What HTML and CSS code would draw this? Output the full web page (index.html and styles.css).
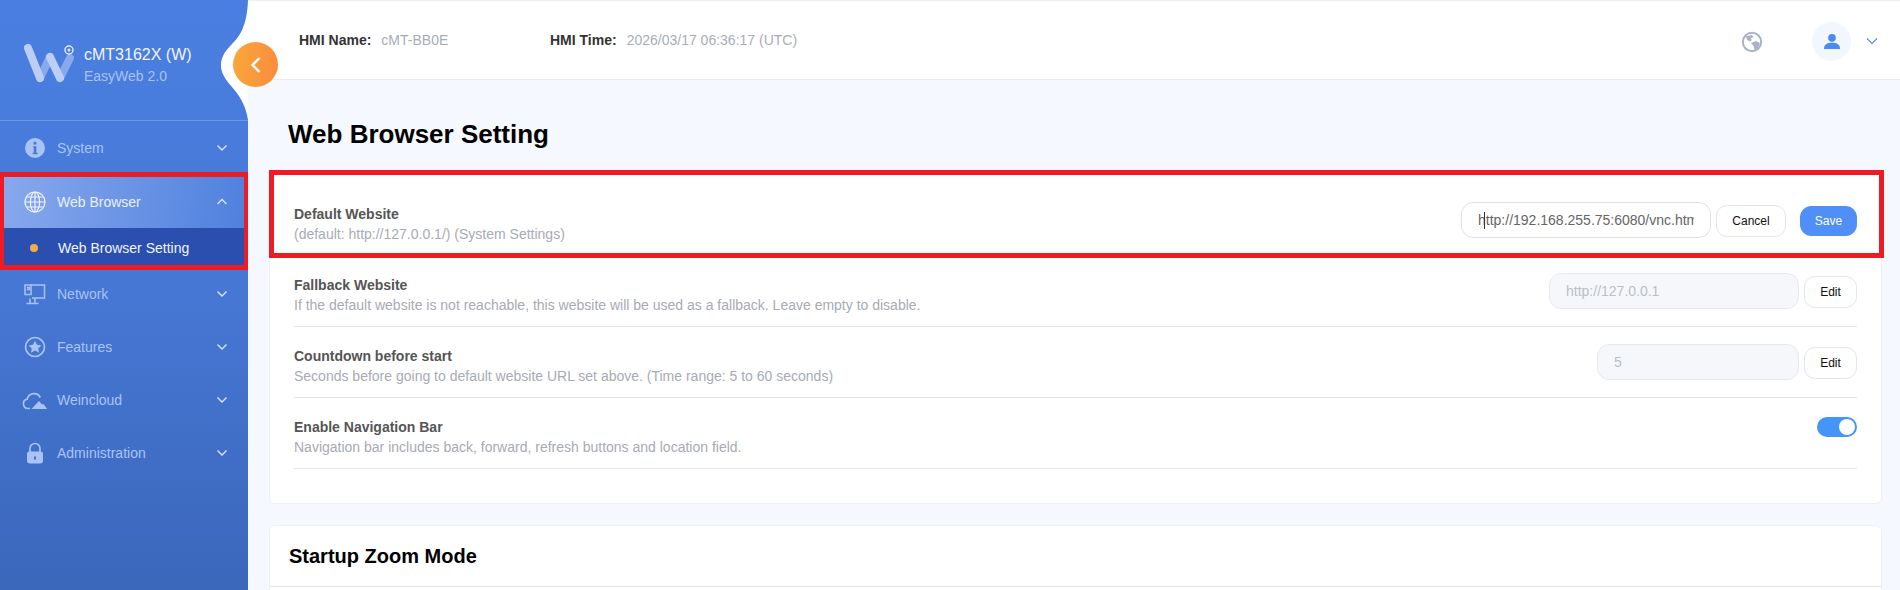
FILE: index.html
```html
<!DOCTYPE html>
<html lang="en">
<head>
<meta charset="utf-8">
<title>Web Browser Setting</title>
<link rel="stylesheet" href="styles.css">
</head>
<body>
<aside class="sidebar">
  <div class="brand">
    <svg class="logo" width="50" height="42" viewBox="0 0 50 42">
      <path d="M16 35 L26 14" class="logo-b"/>
      <path d="M36 35 L46 15" class="logo-b"/>
      <path d="M4 5 L16 35" class="logo-a"/>
      <path d="M26 14 L36 35" class="logo-a"/>
      <circle cx="45" cy="7" r="4" class="logo-ring"/>
      <circle cx="45" cy="7" r="1.500" class="logo-dot"/>
    </svg>
    <div class="brand-text">
      <div class="brand-name">cMT3162X (W)</div>
      <div class="brand-sub">EasyWeb 2.0</div>
    </div>
  </div>
  <nav class="menu">
    <div class="item first">
      <svg class="icon" width="24" height="24" viewBox="0 0 24 24"><path class="fill" fill-rule="evenodd" d="M12 2a10 10 0 1 0 0 20 10 10 0 0 0 0-20zM12 5.600a1.600 1.600 0 1 1 0 3.200 1.600 1.600 0 0 1 0-3.200zM10 10.200h3.400v6.600h1.200v1.400h-5v-1.400h1.200v-5.200h-.8z"/></svg>
      <span class="label">System</span>
      <svg class="chev" width="12" height="8" viewBox="0 0 12 8"><path d="M1.500 1.500 L6 6 L10.500 1.500"/></svg>
    </div>
    <div class="item active">
      <svg class="icon" width="24" height="24" viewBox="0 0 24 24"><g class="line"><circle cx="12" cy="12" r="10"/><ellipse cx="12" cy="12" rx="4.600" ry="10"/><path d="M12 2v20M2 12h20M3.400 7h17.200M3.400 17h17.200"/></g></svg>
      <span class="label">Web Browser</span>
      <svg class="chev" width="12" height="8" viewBox="0 0 12 8"><path d="M1.500 6 L6 1.500 L10.500 6"/></svg>
    </div>
    <div class="subitem"><span class="dot"></span><span>Web Browser Setting</span></div>
    <div class="item">
      <svg class="icon" width="24" height="24" viewBox="0 0 24 24"><g class="line"><path d="M8 3h13.500v13H9M7 16.500v4.500M3.500 21.500h12M12 16.500v5"/><path d="M2 3h6v9.500H2zM3.800 5.500h2.400v2H3.800"/></g></svg>
      <span class="label">Network</span>
      <svg class="chev" width="12" height="8" viewBox="0 0 12 8"><path d="M1.500 1.500 L6 6 L10.500 1.500"/></svg>
    </div>
    <div class="item">
      <svg class="icon" width="24" height="24" viewBox="0 0 24 24"><circle class="line ring" cx="12" cy="12" r="9.500"/><path class="fill" d="M12 5.800l2 4 4.400.6-3.200 3 .8 4.300-4-2.100-4 2.100.8-4.300-3.200-3 4.400-.6z"/></svg>
      <span class="label">Features</span>
      <svg class="chev" width="12" height="8" viewBox="0 0 12 8"><path d="M1.500 1.500 L6 6 L10.500 1.500"/></svg>
    </div>
    <div class="item">
      <svg class="icon wide" width="26" height="24" viewBox="0 0 26 24"><path class="line ring" d="M8 20.500H6A4.700 4.700 0 0 1 5.200 11.200 7 7 0 0 1 18.300 9.500"/><path class="fill" d="M9.500 21l7.500-8 3 3.500 1.500-.5 3.500 5z"/></svg>
      <span class="label">Weincloud</span>
      <svg class="chev" width="12" height="8" viewBox="0 0 12 8"><path d="M1.500 1.500 L6 6 L10.500 1.500"/></svg>
    </div>
    <div class="item">
      <svg class="icon" width="24" height="24" viewBox="0 0 24 24"><path class="line ring" d="M7 11V7.500a5 5 0 0 1 10 0V11"/><path class="fill" fill-rule="evenodd" d="M6.500 10.500h11a2.500 2.500 0 0 1 2.500 2.500v6.500a3 3 0 0 1-3 3H7a3 3 0 0 1-3-3V13a2.500 2.500 0 0 1 2.500-2.500zM11 15.500v3h2v-3z"/></svg>
      <span class="label">Administration</span>
      <svg class="chev" width="12" height="8" viewBox="0 0 12 8"><path d="M1.500 1.500 L6 6 L10.500 1.500"/></svg>
    </div>
  </nav>
</aside>

<svg class="notch" width="28" height="120" viewBox="0 0 28 120"><path d="M28 0 V120 C26 106 20 96 12 87 C4 78 1 72 1 65 C1 58 4 52 12 44 C20 36 27 26 28 0 Z"/></svg>
<div class="collapse">
  <svg width="16" height="20" viewBox="0 0 16 20"><path d="M11.500 3 L4.500 10 L11.500 17"/></svg>
</div>

<main class="main">
  <header class="topbar">
    <div class="info name"><b>HMI Name:</b><span>cMT-BB0E</span></div>
    <div class="info time"><b>HMI Time:</b><span>2026/03/17 06:36:17 (UTC)</span></div>
    <div class="tools">
      <svg class="earth" width="22" height="22" viewBox="0 0 22 22"><circle class="earth-ring" cx="11" cy="11" r="9.200"/><path class="earth-land" d="M4.500 5.500 L11 4 L12.500 6 L9.500 7.500 L11 9 L8.500 10.500 L6 8.500 Z M10 12 L15 10 L19 12 L17 17 L13.500 19 L12.500 15 Z"/></svg>
      <div class="avatar">
        <svg width="16" height="15" viewBox="0 0 16 15"><circle cx="8" cy="3.900" r="3.800"/><path d="M0 15 C0 10.500 3 8.800 8 8.800 C13 8.800 16 10.500 16 15 Z"/></svg>
      </div>
      <svg class="caret-down" width="12" height="8" viewBox="0 0 12 8"><path d="M1 1.500 L6 6.500 L11 1.500"/></svg>
    </div>
  </header>

  <div class="content">
    <h1 class="page-title">Web Browser Setting</h1>
    <section class="card">
      <div class="row">
        <div class="text">
          <div class="row-title">Default Website</div>
          <div class="row-desc">(default: http://127.0.0.1/) (System Settings)</div>
        </div>
        <div class="field"><span class="field-text">http://192.168.255.75:6080/vnc.html</span><i class="text-caret"></i></div>
        <button class="btn cancel">Cancel</button>
        <button class="btn primary">Save</button>
      </div>
      <div class="row">
        <div class="text">
          <div class="row-title">Fallback Website</div>
          <div class="row-desc">If the default website is not reachable, this website will be used as a fallback. Leave empty to disable.</div>
        </div>
        <div class="field disabled"><span class="field-text">http://127.0.0.1</span></div>
        <button class="btn">Edit</button>
      </div>
      <div class="row">
        <div class="text">
          <div class="row-title">Countdown before start</div>
          <div class="row-desc">Seconds before going to default website URL set above. (Time range: 5 to 60 seconds)</div>
        </div>
        <div class="field disabled short"><span class="field-text">5</span></div>
        <button class="btn">Edit</button>
      </div>
      <div class="row">
        <div class="text">
          <div class="row-title">Enable Navigation Bar</div>
          <div class="row-desc">Navigation bar includes back, forward, refresh buttons and location field.</div>
        </div>
        <span class="toggle"><span class="knob"></span></span>
      </div>
    </section>
    <section class="card second">
      <h2 class="card-title">Startup Zoom Mode</h2>
    </section>
  </div>
</main>

<div class="mark mark-nav"></div>
<div class="mark mark-row"></div>
</body>
</html>
```
FILE: styles.css
```css
* { box-sizing: border-box; }
html, body { height: 590px; overflow: hidden; }
body {
  margin: 0;
  display: flex;
  position: relative;
  font-family: "Liberation Sans", Arial, sans-serif;
  background: #f5f9ff;
  color: #333;
}

/* sidebar */
.sidebar {
  width: 248px;
  height: 590px;
  flex: none;
  background: linear-gradient(180deg, #4a7fe1 0%, #4677d4 50%, #3b67bb 100%);
}
.brand {
  height: 121px;
  border-bottom: 1px solid #6d98e8;
  display: flex;
  align-items: flex-start;
  padding: 43px 0 0 24px;
  gap: 10px;
}
.logo { flex: none; }
.logo path { fill: none; stroke-width: 8; stroke-linecap: round; }
.logo-a { stroke: #bccef5; }
.logo-b { stroke: #9db8ef; stroke-opacity: .75; }
.logo-ring { fill: none; stroke: #dfe8fb; stroke-width: 1.500; }
.logo-dot { fill: #dfe8fb; }
.brand-text { margin-top: 1px; }
.brand-name { font-size: 16px; line-height: 22px; color: #f1f5fd; }
.brand-sub { font-size: 14px; line-height: 20px; margin-top: 0; color: #a9c2f3; }

.menu { display: flex; flex-direction: column; }
.item {
  height: 53px;
  display: flex;
  align-items: center;
  padding: 0 20px 0 23px;
  color: #a9c3f4;
  font-size: 14px;
}
.item.first { margin-bottom: 1px; }
.item .icon { flex: none; }
.item .icon.wide { margin-left: -1px; margin-right: -1px; }
.label { margin-left: 10px; flex: 1; }
.item.active {
  background: linear-gradient(100deg, #89a9ed 0%, #4e80de 100%);
  color: #eaf0fc;
}
.fill { fill: #a9c3f4; }
.line { fill: none; stroke: #a9c3f4; stroke-width: 1.500; }
.ring { stroke-width: 1.700; }
.item.active .line { stroke: #eef3fd; stroke-width: 1.200; }
.chev { fill: none; flex: none; }
.chev path { fill: none; stroke: #dce6fa; stroke-width: 1.400; }
.subitem {
  height: 39px;
  background: #2a4fae;
  color: #f0f4fd;
  font-size: 14px;
  display: flex;
  align-items: center;
  padding-left: 30px;
  gap: 20px;
}
.dot { width: 8px; height: 8px; border-radius: 50%; background: #f6ab4a; flex: none; }

/* collapse handle */
.notch { position: absolute; left: 220px; top: 0; }
.notch path { fill: #fff; }
.collapse {
  position: absolute;
  left: 233px;
  top: 42px;
  width: 45px;
  height: 45px;
  border-radius: 50%;
  background: linear-gradient(100deg, #f9a93a 0%, #f98a3e 100%);
  display: flex;
  align-items: center;
  justify-content: center;
}
.collapse path { fill: none; stroke: #fff; stroke-width: 2.400; }

/* main column */
.main { flex: 1; min-width: 0; display: flex; flex-direction: column; }
.topbar {
  height: 80px;
  flex: none;
  background: #fff;
  border-top: 1px solid #eeeeee;
  border-bottom: 1px solid #e8ebf0;
  display: flex;
  align-items: center;
  padding: 0 22px 0 51px;
  font-size: 14px;
}
.info { display: flex; gap: 10px; }
.info b { color: #333; }
.info span { color: #a7adb8; }
.info.name { width: 251px; }
.tools { margin-left: auto; display: flex; align-items: center; }
.earth { margin-right: 49px; margin-top: 4px; }
.earth-ring { fill: none; stroke: #a9b3c6; stroke-width: 2; }
.earth-land { fill: #a9b3c6; }
.avatar {
  width: 39px;
  height: 39px;
  border-radius: 50%;
  background: #f2f6fd;
  display: flex;
  align-items: center;
  justify-content: center;
  margin-right: 15px;
  margin-top: 2px;
}
.avatar svg { fill: #4a8af4; }
.caret-down { margin-top: 2px; }
.caret-down path { fill: none; stroke: #4a8af4; stroke-width: 1.100; }

.content { padding: 0 18px 0 21px; }
.page-title {
  margin: 0;
  height: 90px;
  padding: 36px 0 0 19px;
  font-size: 26px;
  line-height: 36px;
  font-weight: 700;
  color: #000;
}
.card {
  background: #fff;
  border: 1px solid #edf0f5;
  border-radius: 6px;
  padding: 14px 24px 35px;
  height: 334px;
}
.row {
  height: 71px;
  border-bottom: 1px solid #e3e6eb;
  display: flex;
  align-items: center;
}
.text { flex: 1; padding-top: 8px; }
.row-title { font-size: 14px; line-height: 20px; font-weight: 700; color: #555; }
.row-desc { font-size: 14px; line-height: 21px; color: #a7abb3; }
.field {
  position: relative;
  width: 250px;
  height: 36px;
  border: 1px solid #dfe3e9;
  border-radius: 12px;
  padding: 0 16px;
  font-size: 14px;
  line-height: 34px;
  color: #666;
  overflow: hidden;
  white-space: nowrap;
  margin-right: 5px;
  flex: none;
}
.field-text { display: block; overflow: hidden; }
.field.disabled { background: #f5f7fa; color: #bcbfc6; border-color: #e7e9ee; }
.field.short { width: 202px; }
.text-caret {
  position: absolute;
  left: 22px;
  top: 9px;
  width: 1px;
  height: 17px;
  background: #333;
}
.btn {
  height: 32px;
  width: 53px;
  margin-top: 2px;
  padding: 0;
  border: 1px solid #e3e6eb;
  border-radius: 11px;
  background: #fff;
  color: #111;
  font: 12px "Liberation Sans", Arial, sans-serif;
  flex: none;
}
.btn.cancel { width: 70px; }
.btn.primary {
  height: 30px;
  width: 57px;
  margin-left: 14px;
  background: #4f8ff7;
  border-color: #4f8ff7;
  color: #fff;
}
.toggle {
  width: 40px;
  height: 20px;
  border-radius: 10px;
  background: #4396f6;
  padding: 2px;
  display: flex;
  justify-content: flex-end;
  margin-bottom: 12px;
  flex: none;
}
.knob { width: 16px; height: 16px; border-radius: 50%; background: #fff; }

.card.second { height: 80px; margin-top: 21px; padding: 0; }
.card-title {
  margin: 0;
  height: 61px;
  border-bottom: 1px solid #e3e6eb;
  padding-left: 19px;
  font-size: 20px;
  line-height: 61px;
  font-weight: 700;
  color: #000;
}

/* red annotation frames drawn over the UI */
.mark { position: absolute; border: 5px solid #ed1c24; pointer-events: none; }
.mark-nav { left: 0; top: 172px; width: 248px; height: 98px; border-width: 5px 4px; }
.mark-row { left: 269px; top: 170px; width: 1615px; height: 88px; }
```
